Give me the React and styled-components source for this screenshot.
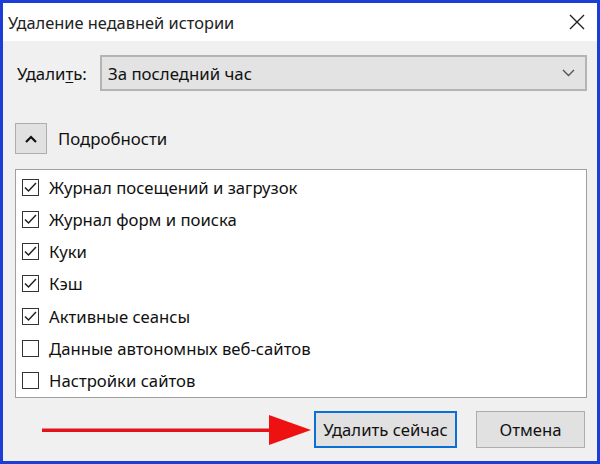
import React from "react";
import styled, { createGlobalStyle } from "styled-components";

const Global = createGlobalStyle`
  html, body { margin: 0; padding: 0; background: #fff; }
  * { box-sizing: border-box; }
`;

const FONT = `"Noto Sans", "Open Sans", Arial, sans-serif`;

const Frame = styled.div`
  width: 600px;
  height: 464px;
  border: 3px solid #1c3ed6;
  display: flex;
  flex-direction: column;
  font-family: ${FONT};
  color: #111;
  background: #f0f0f0;
  overflow: hidden;
`;

const TitleBar = styled.div`
  height: 38px;
  background: #fff;
  display: flex;
  align-items: center;
  justify-content: space-between;
  padding: 0 12px 0 5px;
  font-size: 16.4px;
  color: #222;
`;

const Close = styled.svg`
  width: 16px;
  height: 16px;
`;

const Body = styled.div`
  flex: 1;
  display: flex;
  flex-direction: column;
  padding: 14px 10px 0 12px;
`;

const Row = styled.div`
  display: flex;
  align-items: center;
`;

const Label = styled.label`
  width: 85px;
  padding-left: 2px;
  font-size: 16.8px;
  u { text-decoration: underline; text-underline-offset: 2px; }
`;

const Select = styled.div`
  flex: 1;
  height: 36px;
  background: #e3e3e3;
  border: 2px solid #b4b4b4;
  display: flex;
  align-items: center;
  justify-content: space-between;
  padding: 0 10px 0 6px;
  font-size: 16.8px;
`;

const DetailsRow = styled(Row)`
  margin-top: 32px;
  gap: 11px;
`;

const ToggleBtn = styled.div`
  width: 32px;
  height: 31px;
  border: 1px solid #adadad;
  background: #e1e1e1;
  display: flex;
  align-items: center;
  justify-content: center;
`;

const DetailsText = styled.span`
  font-size: 16.8px;
`;

const List = styled.div`
  margin-top: 15px;
  height: 229px;
  background: #fff;
  border: 1.5px solid #a0a0a0;
  padding: 1px 0 0 6px;
  display: flex;
  flex-direction: column;
`;

const Item = styled.div`
  height: 32.3px;
  display: flex;
  align-items: center;
  gap: 10px;
  font-size: 16.7px;
`;

const Box = styled.span`
  width: 17px;
  height: 17px;
  border: 1.5px solid #333;
  background: #fff;
  display: flex;
  align-items: center;
  justify-content: center;
`;

const Footer = styled.div`
  margin-top: 13px;
  display: flex;
  align-items: center;
  justify-content: flex-end;
  padding-right: 2px;
`;

const Arrow = styled.svg`
  width: 269px;
  height: 36px;
  margin-right: 3px;
`;

const Button = styled.div`
  height: 37px;
  width: ${(p) => p.$w}px;
  margin-left: ${(p) => p.$ml || 0}px;
  background: #e1e1e1;
  border: ${(p) => (p.$primary ? "2px solid #0a6fd6" : "1px solid #adadad")};
  display: flex;
  align-items: center;
  justify-content: center;
  font-size: 16.7px;
`;

const items = [
  ["Журнал посещений и загрузок", true],
  ["Журнал форм и поиска", true],
  ["Куки", true],
  ["Кэш", true],
  ["Активные сеансы", true],
  ["Данные автономных веб-сайтов", false],
  ["Настройки сайтов", false],
];

export default function App() {
  return (
    <>
      <Global />
      <Frame>
        <TitleBar>
          <span>Удаление недавней истории</span>
          <Close viewBox="0 0 16 16">
            <path d="M1 1L15 15M15 1L1 15" stroke="#222" strokeWidth="1.4" />
          </Close>
        </TitleBar>
        <Body>
          <Row>
            <Label>
              Удали<u>т</u>ь:
            </Label>
            <Select>
              <span>За последний час</span>
              <svg width="13" height="8" viewBox="0 0 13 8">
                <path d="M1 1L6.5 6.5L12 1" stroke="#555" strokeWidth="1.4" fill="none" />
              </svg>
            </Select>
          </Row>
          <DetailsRow>
            <ToggleBtn>
              <svg width="12" height="8" viewBox="0 0 12 8">
                <path d="M1 7L6 2L11 7" stroke="#111" strokeWidth="2.2" fill="none" />
              </svg>
            </ToggleBtn>
            <DetailsText>Подробности</DetailsText>
          </DetailsRow>
          <List>
            {items.map(([t, c]) => (
              <Item key={t}>
                <Box>
                  {c && (
                    <svg width="13" height="11" viewBox="0 0 13 11">
                      <path d="M1 5.5L4.5 9L12 1" stroke="#222" strokeWidth="1.5" fill="none" />
                    </svg>
                  )}
                </Box>
                <span>{t}</span>
              </Item>
            ))}
          </List>
          <Footer>
            <Arrow viewBox="0 0 269 36">
              <rect x="0" y="16.5" width="233" height="3.5" fill="#e3131b" />
              <polygon points="227,3 269,18 227,33" fill="#ee1111" />
            </Arrow>
            <Button $primary $w={143}>Удалить сейчас</Button>
            <Button $w={109} $ml={19}>Отмена</Button>
          </Footer>
        </Body>
      </Frame>
    </>
  );
}
